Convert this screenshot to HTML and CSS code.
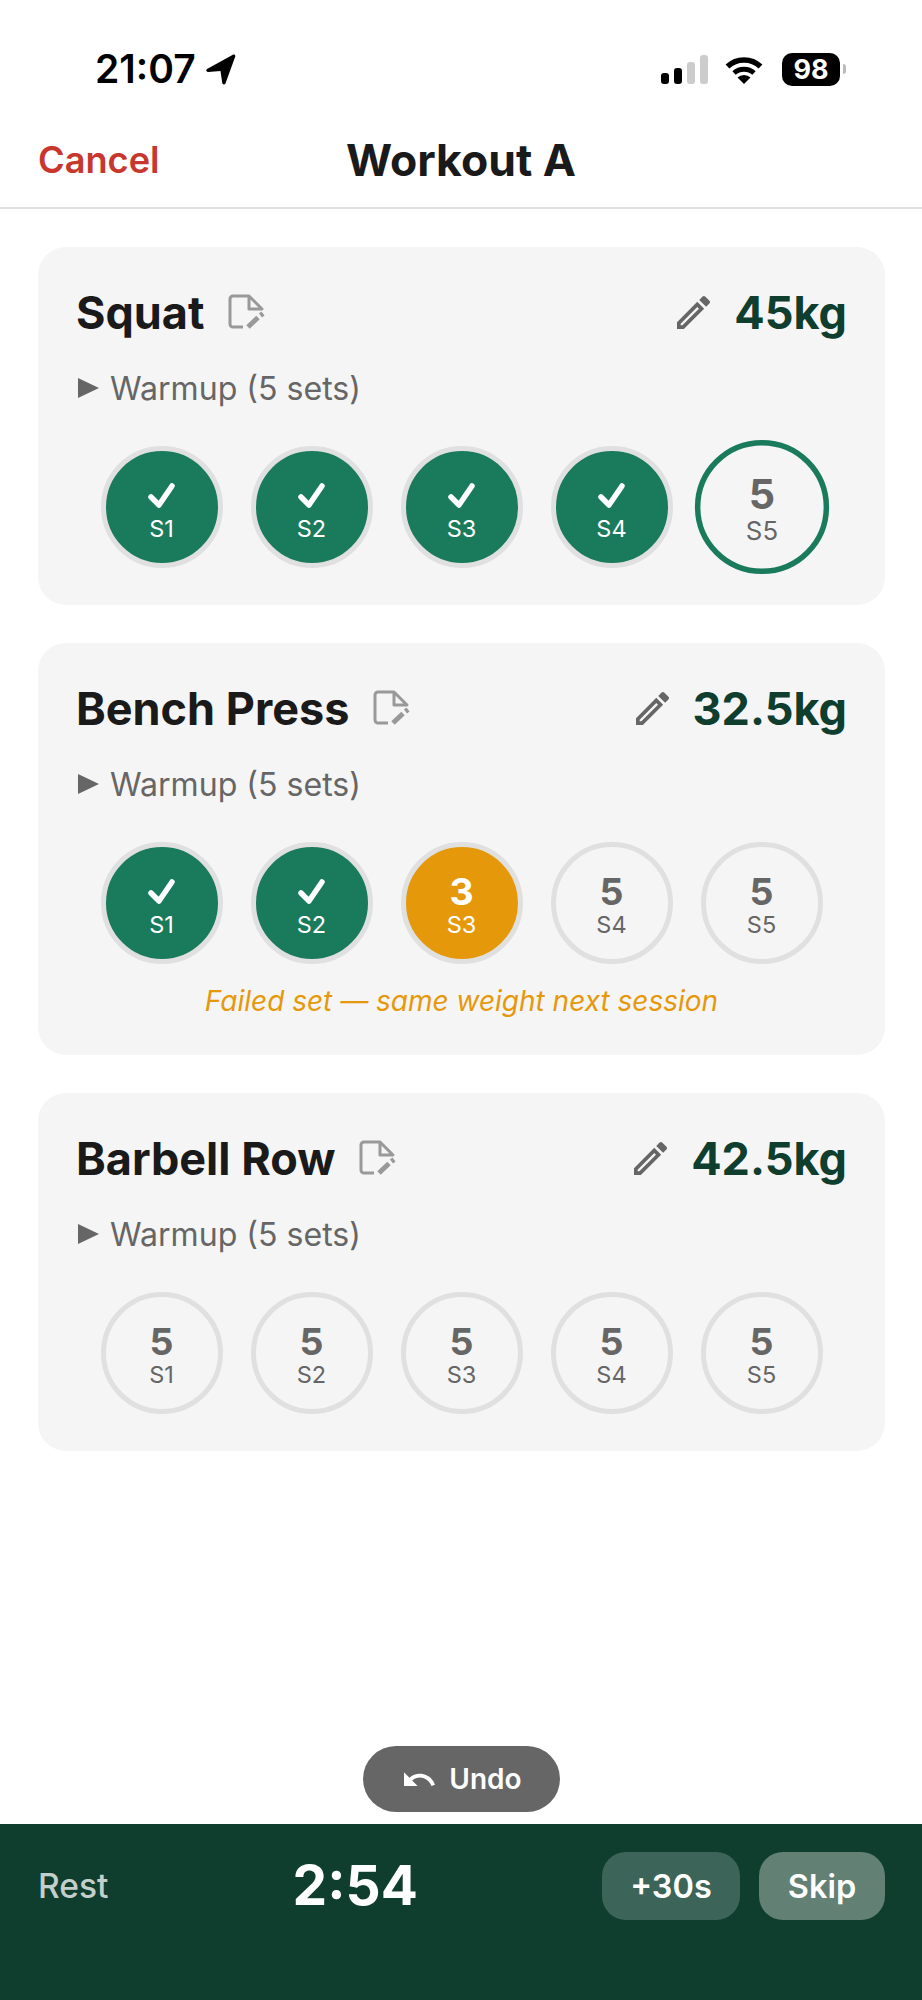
FILE: index.html
```html
<!DOCTYPE html>
<html lang="en">
<head>
  <meta charset="UTF-8" />
  <meta name="viewport" content="width=device-width, initial-scale=1.0"/>
  <title>Workout A</title>
  <link rel="stylesheet" href="styles.css">
</head>
<body>
  <svg class="defs" width="0" height="0">
    <symbol id="note" viewBox="-2 -2 37 36">
      <path d="M19 0H3a3 3 0 0 0-3 3v25a3 3 0 0 0 3 3h10M19 0l13 13H19z" fill="none" stroke="currentColor" stroke-width="3" stroke-linejoin="round"/>
      <path d="M18 31l10-9.500M30.500 19.500l2.500-2" fill="none" stroke="currentColor" stroke-width="5"/>
    </symbol>
    <symbol id="pencil" viewBox="3 3 18 18">
      <path d="M14.060 9.020l.92.92L5.920 19H5v-.92l9.060-9.060M17.660 3c-.25 0-.51.1-.7.29l-1.830 1.830 3.750 3.750 1.830-1.830c.39-.39.39-1.020 0-1.410l-2.340-2.340c-.2-.2-.45-.29-.71-.29zm-3.600 3.190L3 17.250V21h3.750L17.810 9.940l-3.750-3.750z" fill="currentColor"/>
    </symbol>
    <symbol id="check" viewBox="0 0 27 25">
      <path d="M3 14l8 8L24 3" fill="none" stroke="currentColor" stroke-width="5.500" stroke-linecap="round" stroke-linejoin="round"/>
    </symbol>
  </svg>

  <div class="app">
    <div class="status-bar">
      <div class="status-time">
        <span>21:07</span>
        <svg class="arrow" viewBox="0 0 29 30"><path d="M1 14.500L26 .7c1.500-.8 2.800.5 2.200 2L19 28c-.7 2-3 1.900-3.300-.2L14 16.500 2 17.300c-1.800.1-2.500-1.900-1-2.800z" fill="#000"/></svg>
      </div>
      <div class="status-icons">
        <div class="signal">
          <span class="bar b1"></span>
          <span class="bar b2"></span>
          <span class="bar b3 off"></span>
          <span class="bar b4 off"></span>
        </div>
        <svg class="wifi" viewBox="0 0 38 29">
          <path d="M2.500 11.500a24 24 0 0 1 33 0" fill="none" stroke="#000" stroke-width="5.500"/>
          <path d="M9 18a15 15 0 0 1 20 0" fill="none" stroke="#000" stroke-width="5"/>
          <path d="M12.500 22.500a9.500 9.500 0 0 1 13 0L19 29z" fill="#000"/>
        </svg>
        <div class="battery"><span>98</span></div>
        <span class="battery-cap"></span>
      </div>
    </div>

    <div class="nav">
      <span class="cancel">Cancel</span>
      <span class="nav-title">Workout A</span>
    </div>

    <div class="content">
      <div class="card">
        <div class="card-head">
          <div class="name">Squat <svg class="note"><use href="#note"/></svg></div>
          <div class="weight"><svg class="pencil"><use href="#pencil"/></svg> 45kg</div>
        </div>
        <div class="warmup"><span class="tri"></span>Warmup (5 sets)</div>
        <div class="sets">
          <div class="set done"><div class="num"><svg class="check"><use href="#check"/></svg></div><div class="label">S1</div></div>
          <div class="set done"><div class="num"><svg class="check"><use href="#check"/></svg></div><div class="label">S2</div></div>
          <div class="set done"><div class="num"><svg class="check"><use href="#check"/></svg></div><div class="label">S3</div></div>
          <div class="set done"><div class="num"><svg class="check"><use href="#check"/></svg></div><div class="label">S4</div></div>
          <div class="set active"><div class="num">5</div><div class="label">S5</div></div>
        </div>
      </div>

      <div class="card">
        <div class="card-head">
          <div class="name">Bench Press <svg class="note"><use href="#note"/></svg></div>
          <div class="weight"><svg class="pencil"><use href="#pencil"/></svg> 32.5kg</div>
        </div>
        <div class="warmup"><span class="tri"></span>Warmup (5 sets)</div>
        <div class="sets">
          <div class="set done"><div class="num"><svg class="check"><use href="#check"/></svg></div><div class="label">S1</div></div>
          <div class="set done"><div class="num"><svg class="check"><use href="#check"/></svg></div><div class="label">S2</div></div>
          <div class="set failed"><div class="num">3</div><div class="label">S3</div></div>
          <div class="set"><div class="num">5</div><div class="label">S4</div></div>
          <div class="set"><div class="num">5</div><div class="label">S5</div></div>
        </div>
        <div class="fail-note">Failed set — same weight next session</div>
      </div>

      <div class="card">
        <div class="card-head">
          <div class="name">Barbell Row <svg class="note"><use href="#note"/></svg></div>
          <div class="weight"><svg class="pencil"><use href="#pencil"/></svg> 42.5kg</div>
        </div>
        <div class="warmup"><span class="tri"></span>Warmup (5 sets)</div>
        <div class="sets">
          <div class="set"><div class="num">5</div><div class="label">S1</div></div>
          <div class="set"><div class="num">5</div><div class="label">S2</div></div>
          <div class="set"><div class="num">5</div><div class="label">S3</div></div>
          <div class="set"><div class="num">5</div><div class="label">S4</div></div>
          <div class="set"><div class="num">5</div><div class="label">S5</div></div>
        </div>
      </div>

      <button class="undo">
        <svg class="undo-icon" viewBox="2 7 20.500 9.500"><path d="M12.500 8c-2.650 0-5.050.99-6.900 2.600L2 7v9h9l-3.620-3.620c1.390-1.160 3.160-1.880 5.120-1.880 3.540 0 6.550 2.310 7.600 5.500l2.370-.78C21.080 11.030 17.150 8 12.500 8z" fill="#fff"/></svg>
        Undo
      </button>
    </div>

    <div class="rest-bar">
      <span class="rest-label">Rest</span>
      <span class="rest-time">2:54</span>
      <div class="rest-actions">
        <button class="rest-btn add">+30s</button>
        <button class="rest-btn skip">Skip</button>
      </div>
    </div>
  </div>
</body>
</html>
```

FILE: styles.css
```css
* {
  box-sizing: border-box;
}
body {
  margin: 0;
  background: #fff;
  font-family: Inter, "Liberation Sans", sans-serif;
  color: #1a1a1a;
}
button {
  font-family: inherit;
  border: none;
}
.defs {
  position: absolute;
}
.app {
  display: flex;
  flex-direction: column;
  min-height: 2000px;
}

/* status bar */
.status-bar {
  height: 100px;
  padding: 38px 76px 0 95px;
  display: flex;
  justify-content: space-between;
  align-items: flex-start;
}
.status-time {
  display: flex;
  align-items: center;
  gap: 10px;
  font-size: 39px;
  font-weight: 600;
  line-height: 62px;
  height: 62px;
  color: #000;
}
.arrow {
  width: 30px;
  height: 31px;
}
.status-icons {
  display: flex;
  align-items: center;
  height: 62px;
}
.signal {
  display: flex;
  align-items: flex-end;
  gap: 5px;
  height: 29px;
  margin-right: 17px;
}
.bar {
  width: 8px;
  border-radius: 3px;
  background: #000;
}
.bar.off {
  background: #ccc;
}
.b1 { height: 11px; }
.b2 { height: 16px; }
.b3 { height: 22px; }
.b4 { height: 29px; }
.wifi {
  width: 38px;
  height: 29px;
  margin-right: 19px;
}
.battery {
  width: 58px;
  height: 33px;
  border-radius: 10px;
  background: #000;
  color: #fff;
  font-size: 27px;
  font-weight: 700;
  display: flex;
  align-items: center;
  justify-content: center;
}
.battery-cap {
  width: 3px;
  height: 10px;
  margin-left: 3px;
  border-radius: 0 3px 3px 0;
  background: #bbb;
}

/* nav */
.nav {
  height: 109px;
  padding: 12px 38px 0;
  border-bottom: 2px solid #e0e0e0;
  display: grid;
  grid-template-columns: 1fr auto 1fr;
  align-items: center;
}
.cancel {
  color: #c8372d;
  font-size: 36.200px;
  font-weight: 600;
}
.nav-title {
  font-size: 44.500px;
  font-weight: 700;
}

/* cards */
.content {
  flex: 1;
  padding: 38px 37px 12px 38px;
  display: flex;
  flex-direction: column;
  gap: 38px;
}
.card {
  background: #f5f5f5;
  border-radius: 28px;
  padding: 36px 38px 37px;
}
.card-head {
  display: flex;
  justify-content: space-between;
  align-items: center;
  height: 58px;
}
.name {
  display: flex;
  align-items: center;
  gap: 24px;
  font-size: 45px;
  font-weight: 700;
}
.note {
  width: 37px;
  height: 36px;
  color: #999;
}
.weight {
  display: flex;
  align-items: center;
  gap: 24px;
  font-size: 45px;
  font-weight: 700;
  color: #0f3d2e;
}
.pencil {
  width: 33px;
  height: 33px;
  color: #666;
}
.warmup {
  display: flex;
  align-items: center;
  gap: 11px;
  margin-top: 27px;
  height: 40px;
  font-size: 32.100px;
  color: #666;
}
.tri {
  margin-left: 2px;
  width: 0;
  height: 0;
  border-left: 21px solid #666;
  border-top: 10px solid transparent;
  border-bottom: 10px solid transparent;
}
.sets {
  display: flex;
  justify-content: center;
  gap: 28px;
  margin-top: 38px;
}
.set {
  width: 122px;
  height: 122px;
  padding-top: 3px;
  border-radius: 50%;
  border: 5px solid #e0e0e0;
  color: #666;
  display: flex;
  flex-direction: column;
  align-items: center;
  justify-content: center;
}
.set.done {
  background: #1a7a5c;
  color: #fff;
}
.set.failed {
  background: #e6980b;
  color: #fff;
}
.set.active {
  border-color: #1a7a5c;
  transform: scale(1.1);
}
.num {
  height: 38px;
  font-size: 37.500px;
  font-weight: 700;
  line-height: 38px;
  display: flex;
  align-items: center;
}
.label {
  margin-top: 2px;
  font-size: 23.500px;
  line-height: 24px;
}
.check {
  width: 27px;
  height: 25px;
}
.fail-note {
  margin-top: 21px;
  text-align: center;
  font-size: 28px;
  line-height: 33px;
  font-style: italic;
  color: #e6980b;
}
.undo {
  align-self: center;
  margin-top: auto;
  height: 66px;
  padding: 0 38px 0 41px;
  border-radius: 33px;
  background: #666;
  color: #fff;
  font-size: 28px;
  font-weight: 600;
  display: flex;
  align-items: center;
  gap: 14px;
}
.undo-icon {
  width: 31px;
  height: 15px;
}

/* rest timer */
.rest-bar {
  height: 176px;
  padding: 28px 37px 0 38px;
  background: #0f3d2e;
  display: flex;
  justify-content: space-between;
  align-items: flex-start;
  color: #fff;
}
.rest-label {
  height: 68px;
  line-height: 68px;
  font-size: 33.500px;
  font-weight: 500;
  color: #c3cfca;
}
.rest-time {
  height: 68px;
  line-height: 66px;
  font-size: 55px;
  font-weight: 700;
}
.rest-actions {
  display: flex;
  gap: 19px;
}
.rest-btn {
  height: 68px;
  border-radius: 24px;
  color: #fff;
  font-size: 32.500px;
  font-weight: 600;
}
.add {
  width: 138px;
  background: #3d6458;
}
.skip {
  width: 126px;
  background: #638075;
}
```
